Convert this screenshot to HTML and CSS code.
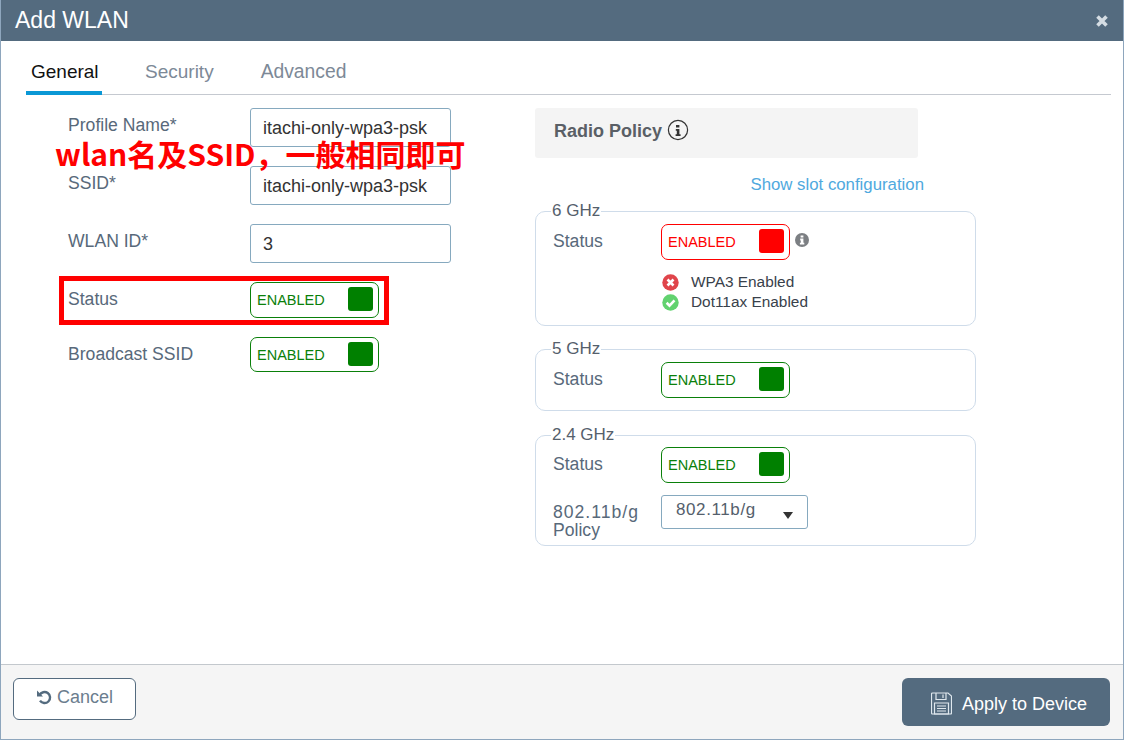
FILE: index.html
```html
<!DOCTYPE html>
<html lang="zh-CN">
<head>
  <meta charset="UTF-8">
  <title>Add WLAN</title>
  <link rel="stylesheet" href="styles.css">
</head>
<body>

<div class="modal">
  <div class="modal-head">
    <h1>Add WLAN</h1>
    <svg class="close-icon" width="14" height="14" viewBox="0 0 14 14"><path d="M2.5 2.5l9 9M11.5 2.5l-9 9"/></svg>
  </div>

  <div class="modal-body">
    <ul class="tabs">
      <li class="tab-general current">General</li>
      <li class="tab-security">Security</li>
      <li>Advanced</li>
    </ul>

    <div class="panes">
      <!--left form-->
      <div class="form-pane">
        <div class="form-row">
          <label>Profile Name*</label>
          <div class="text-input">itachi-only-wpa3-psk</div>
        </div>
        <div class="form-row">
          <label>SSID*</label>
          <div class="text-input">itachi-only-wpa3-psk</div>
        </div>
        <div class="form-row">
          <label>WLAN ID*</label>
          <div class="text-input">3</div>
        </div>
        <div class="form-row">
          <label>Status</label>
          <div class="toggle"><span>ENABLED</span><i></i></div>
        </div>
        <div class="form-row">
          <label>Broadcast SSID</label>
          <div class="toggle toggle-short"><span>ENABLED</span><i></i></div>
        </div>
      </div>

      <!--right radio policy-->
      <div class="radio-pane">
        <div class="radio-title">
          <span>Radio Policy</span>
          <svg width="22" height="22" viewBox="0 0 22 22"><circle class="ring" cx="11" cy="11" r="9.6"/><path class="ring-i" d="M9 6h3.4v2.6H9zM8.8 10h3.6v5.2h1.2V17H8.6v-1.8h1.2v-3.4h-1z"/></svg>
        </div>
        <a class="slot-link" href="javascript:;">Show slot configuration</a>

        <fieldset class="band band-6">
          <legend>6 GHz</legend>
          <div class="band-row">
            <label>Status</label>
            <div class="toggle toggle-red"><span>ENABLED</span><i></i></div>
            <svg class="info-icon" width="14" height="14" viewBox="0 0 14 14"><circle cx="7" cy="7" r="7"/><path d="M5.6 2.4h2.8v2.1H5.6zM5.2 5.6h3.2v4.2h.9v1.8H4.9V9.8h.9V7.4h-.6z"/></svg>
          </div>
          <ul class="checks">
            <li>
              <svg width="17" height="17" viewBox="0 0 17 17"><circle class="dot-bad" cx="8.5" cy="8.5" r="8.2"/><path class="mark" d="M5.5 5.5l6 6M11.5 5.5l-6 6"/></svg>
              WPA3 Enabled
            </li>
            <li>
              <svg width="17" height="17" viewBox="0 0 17 17"><circle class="dot-good" cx="8.5" cy="8.5" r="8.2"/><path class="mark" d="M4.6 8.8l2.9 2.8 5-5.2"/></svg>
              Dot11ax Enabled
            </li>
          </ul>
        </fieldset>

        <fieldset class="band">
          <legend>5 GHz</legend>
          <div class="band-row">
            <label>Status</label>
            <div class="toggle"><span>ENABLED</span><i></i></div>
          </div>
        </fieldset>

        <fieldset class="band band-24">
          <legend>2.4 GHz</legend>
          <div class="band-row">
            <label>Status</label>
            <div class="toggle"><span>ENABLED</span><i></i></div>
          </div>
          <div class="band-row policy-row">
            <label><span class="policy-num">802.11b/g</span> Policy</label>
            <div class="select-box"><span>802.11b/g</span><b></b></div>
          </div>
        </fieldset>
      </div>
    </div>
  </div>

  <div class="modal-foot">
    <button class="btn-cancel">
      <svg width="16" height="16" viewBox="0 0 16 16"><path d="M3.6 6.2A5.5 5.5 0 1 1 4 11.6"/><path class="undo-head" d="M1 1.6v6h6z"/></svg>
      Cancel
    </button>
    <button class="btn-apply">
      <svg width="21" height="23" viewBox="0 0 21 23"><path d="M1.500 1h15.500l3.500 3v17a1 1 0 0 1-1 1H1.500a1 1 0 0 1-1-1V2a1 1 0 0 1 1-1z"/><path d="M5 1v6.500h10V1M12 2.500v3.500"/><path d="M3.500 11h14v11h-14zM6 14h9M6 16.500h9M6 19h9"/></svg>
      Apply to Device
    </button>
  </div>

  <!--红色标注-->
  <div class="note-text">wlan名及SSID，一般相同即可</div>
  <div class="note-box"></div>
</div>

</body>
</html>
```

FILE: styles.css
```css
* {
  margin: 0;
  padding: 0;
  box-sizing: border-box;
  list-style: none;
}

body {
  background-color: #fff;
  font-family: "Liberation Sans", Arial, sans-serif;
  color: #58697a;
}

.modal {
  width: 1124px;
  height: 740px;
  border: 1px solid #8ea6bd;
  border-top: 0;
  display: flex;
  flex-direction: column;
  position: relative;
  overflow: hidden;
}

.modal-head {
  height: 41px;
  margin: 0 -1px;
  background-color: #546b7f;
  color: #fff;
  display: flex;
  align-items: center;
  justify-content: space-between;
  padding: 0 15px;
}

.modal-head h1 {
  font-size: 23px;
  font-weight: 400;
}

.close-icon {
  fill: none;
  stroke: #d5dde4;
  stroke-width: 3.6;
}

.modal-body {
  flex: 1;
}

.tabs {
  display: flex;
  height: 54px;
  margin: 0 12px 0 25px;
  border-bottom: 1px solid #c5c9d0;
  font-size: 19px;
  color: #7d8997;
}

.tabs li {
  padding: 20px 5px 0;
}

.tabs li:last-child {
  font-size: 19.3px;
}

.tabs .tab-general {
  width: 76px;
  margin-right: 38px;
}

.tabs .tab-security {
  margin-right: 37px;
}

.tabs .current {
  color: #111;
  height: 54px;
  border-bottom: 4px solid #0a98d6;
}

.panes {
  display: flex;
  padding: 13px 0 0 67px;
}

.form-pane {
  width: 467px;
}

.form-row {
  display: grid;
  grid-template-columns: 182px 201px;
  align-items: start;
  margin-bottom: 19px;
}

.form-row label {
  font-size: 17.6px;
  line-height: 22px;
  padding-top: 6px;
}

.text-input {
  height: 39px;
  border: 1px solid #86a9bf;
  border-radius: 3px;
  padding-left: 12px;
  font-size: 18px;
  line-height: 38px;
  color: #333;
}

.toggle {
  width: 129px;
  height: 36px;
  border: 1px solid #0a800a;
  border-radius: 7px;
  padding: 0 5px 0 6px;
  display: flex;
  align-items: center;
  justify-content: space-between;
  font-size: 14.500px;
  color: #0a800a;
}

.toggle i {
  width: 25px;
  height: 24px;
  margin-top: -2px;
  border-radius: 3px;
  background-color: #008000;
}

.toggle-short {
  height: 35px;
}

.toggle-red {
  border-color: #f00;
  color: #f00;
}

.toggle-red i {
  background-color: #f00;
}

.radio-pane {
  width: 441px;
}

.radio-title {
  width: 383px;
  height: 50px;
  border-radius: 3px;
  background-color: #f4f4f4;
  padding: 11px 0 0 19px;
  display: flex;
  align-items: flex-start;
  gap: 5px;
  font-size: 18px;
  font-weight: 700;
  line-height: 24px;
  color: #5a5f66;
}

.ring {
  fill: none;
  stroke: #333;
  stroke-width: 1.2;
}

.ring-i {
  fill: #333;
}

.slot-link {
  display: block;
  width: 389px;
  margin-top: 16px;
  text-align: right;
  font-size: 16.800px;
  line-height: 21px;
  color: #4fa9de;
  text-decoration: none;
}

.band {
  border: 1px solid #cfdcea;
  border-radius: 10px;
  padding: 2px 16px 12px 17px;
  margin-top: 12px;
}

.slot-link + .band {
  margin-top: 5px;
}

.band legend {
  margin-left: -2px;
  padding: 0 1px;
  font-size: 17px;
  line-height: 22px;
  color: #55606c;
}

.band-6 {
  padding-bottom: 13px;
}

.band-24 {
  margin-top: 13px;
  padding: 1px 16px 6px 17px;
}

.band-row {
  display: flex;
  align-items: flex-start;
}

.band-row label {
  width: 108px;
  font-size: 17.6px;
  line-height: 22px;
  padding-top: 6px;
}

.info-icon {
  margin: 9px 0 0 5px;
  fill: #7c7f83;
}

.info-icon path {
  fill: #fff;
}

.checks {
  margin: 12px 0 0 109px;
  font-size: 15.400px;
  line-height: 20px;
  color: #39414b;
}

.checks li {
  display: flex;
  align-items: center;
  gap: 12px;
}

.dot-bad {
  fill: #e0454b;
}

.dot-good {
  fill: #62d26f;
}

.mark {
  fill: none;
  stroke: #fff;
  stroke-width: 2.6;
}

.policy-row {
  margin-top: 12px;
}

.policy-row label {
  padding-top: 8px;
  line-height: 18px;
}

.policy-num {
  letter-spacing: 1px;
}

.select-box {
  width: 147px;
  height: 34px;
  border: 1px solid #86a9bf;
  border-radius: 3px;
  padding: 0 14px 0 14px;
  display: flex;
  align-items: center;
  justify-content: space-between;
  font-size: 17px;
  letter-spacing: .6px;
  color: #55606c;
}

.select-box span {
  margin-top: -4px;
}

.select-box b {
  margin-top: 7px;
  border-style: solid;
  border-width: 7px 5px 0;
  border-color: #333 transparent transparent;
}

.modal-foot {
  height: 75px;
  border-top: 1px solid #c3c8cd;
  background-color: #f5f5f5;
  display: flex;
  justify-content: space-between;
  align-items: flex-start;
  padding: 13px 13px 0 12px;
}

.modal-foot button {
  font-family: inherit;
  display: flex;
  align-items: center;
  justify-content: center;
}

.btn-cancel {
  width: 123px;
  height: 42px;
  border: 1px solid #546b7f;
  border-radius: 6px;
  background-color: #fff;
  padding-bottom: 4px;
  font-size: 18px;
  color: #6b7d8e;
  gap: 5px;
}

.btn-cancel svg {
  fill: none;
  stroke: #546b7f;
  stroke-width: 2.4;
}

.btn-cancel .undo-head {
  fill: #546b7f;
  stroke: none;
}

.btn-apply {
  width: 208px;
  height: 48px;
  border: 0;
  border-radius: 6px;
  background-color: #546b7f;
  padding: 4px 0 0 6px;
  font-size: 18px;
  color: #fff;
  gap: 10px;
}

.btn-apply svg {
  margin-top: -2px;
  fill: none;
  stroke: #dfe8ee;
  stroke-width: 1.2;
}

/* annotations drawn over the form */
.note-text {
  position: absolute;
  left: 54px;
  top: 137px;
  font-family: "Noto Sans CJK SC", "Liberation Sans", sans-serif;
  font-size: 30px;
  font-weight: 700;
  line-height: 33px;
  color: #f00;
  white-space: nowrap;
}

.note-box {
  position: absolute;
  left: 58px;
  top: 276px;
  width: 330px;
  height: 49px;
  border: 5px solid #f00;
}
```
